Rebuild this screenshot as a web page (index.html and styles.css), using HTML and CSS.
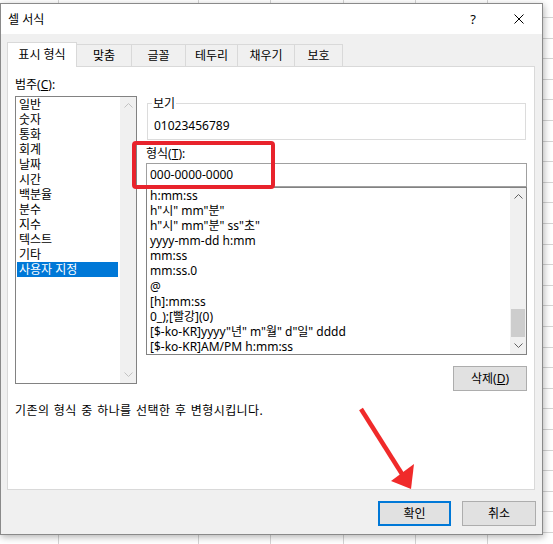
FILE: index.html
```html
<!DOCTYPE html>
<html lang="ko">
<head>
<meta charset="utf-8">
<title>셀 서식</title>
<link rel="stylesheet" href="styles.css">
</head>
<body>
<div class="dialog">
  <div class="titlebar">
    <span class="title">셀 서식</span>
    <div class="caption">
      <span class="cap help">?</span>
      <span class="cap close"><svg width="10" height="10" viewBox="0 0 10 10"><path d="M0.5 0.5L9.5 9.5M9.5 0.5L0.5 9.5" stroke="#000" stroke-width="1" fill="none"/></svg></span>
    </div>
  </div>
  <div class="main">
    <div class="tabs">
      <div class="tab active">표시 형식</div>
      <div class="tab">맞춤</div>
      <div class="tab">글꼴</div>
      <div class="tab">테두리</div>
      <div class="tab">채우기</div>
      <div class="tab">보호</div>
    </div>
    <div class="panel">
      <div class="columns">
        <div class="col-left">
          <div class="label">범주(<u>C</u>):</div>
          <div class="listbox cat-list">
            <ul class="items cat-items">
              <li>일반</li>
              <li>숫자</li>
              <li>통화</li>
              <li>회계</li>
              <li>날짜</li>
              <li>시간</li>
              <li>백분율</li>
              <li>분수</li>
              <li>지수</li>
              <li>텍스트</li>
              <li>기타</li>
              <li class="selected">사용자 지정</li>
            </ul>
            <div class="vscroll disabled">
              <div class="arrow"><svg width="9" height="5" viewBox="0 0 9 5"><polyline points="0.5,4.5 4.5,0.5 8.5,4.5" fill="none" stroke="currentColor"/></svg></div>
              <div class="track"></div>
              <div class="arrow"><svg width="9" height="5" viewBox="0 0 9 5"><polyline points="0.5,0.5 4.5,4.5 8.5,0.5" fill="none" stroke="currentColor"/></svg></div>
            </div>
          </div>
        </div>
        <div class="col-right">
          <fieldset class="sample">
            <legend>보기</legend>
            <div class="sample-value">01023456789</div>
          </fieldset>
          <div class="label fmt-label">형식(<u>T</u>):</div>
          <div class="textbox">000-0000-0000</div>
          <div class="listbox fmt-list">
            <ul class="items fmt-items">
              <li>h:mm:ss</li>
              <li>h"시" mm"분"</li>
              <li>h"시" mm"분" ss"초"</li>
              <li>yyyy-mm-dd h:mm</li>
              <li>mm:ss</li>
              <li>mm:ss.0</li>
              <li>@</li>
              <li>[h]:mm:ss</li>
              <li>0_);[빨강](0)</li>
              <li>[$-ko-KR]yyyy"년" m"월" d"일" dddd</li>
              <li>[$-ko-KR]AM/PM h:mm:ss</li>
            </ul>
            <div class="vscroll">
              <div class="arrow"><svg width="9" height="5" viewBox="0 0 9 5"><polyline points="0.5,4.5 4.5,0.5 8.5,4.5" fill="none" stroke="currentColor"/></svg></div>
              <div class="track"></div>
              <div class="thumb"></div>
              <div class="arrow"><svg width="9" height="5" viewBox="0 0 9 5"><polyline points="0.5,0.5 4.5,4.5 8.5,0.5" fill="none" stroke="currentColor"/></svg></div>
            </div>
          </div>
          <div class="row-right"><button class="btn">삭제(<u>D</u>)</button></div>
        </div>
      </div>
      <p class="desc">기존의 형식 중 하나를 선택한 후 변형시킵니다.</p>
    </div>
  </div>
  <div class="footer">
    <button class="btn primary">확인</button>
    <button class="btn">취소</button>
  </div>
</div>
<div class="highlight"></div>
<svg class="arrow-mark" width="553" height="544" viewBox="0 0 553 544">
  <line x1="361" y1="409" x2="402" y2="474" stroke="#f02a2a" stroke-width="4.5"/>
  <polygon points="411,489 391,481 414,464" fill="#f02a2a"/>
</svg>
</body>
</html>
```

FILE: styles.css
```css
* { box-sizing: border-box; }

body {
  margin: 0;
  padding-top: 3px;
  width: 553px;
  height: 544px;
  overflow: hidden;
  position: relative;
  font-family: "Noto Sans", "Noto Sans CJK KR", sans-serif;
  font-size: 12px;
  color: #000;
  background-color: #fff;
  background-image:
    linear-gradient(to right,
      transparent 58px, #d4d4d4 58px 59px,
      transparent 59px 198px, #d4d4d4 198px 199px,
      transparent 199px 270px, #d4d4d4 270px 271px,
      transparent 271px 343px, #d4d4d4 343px 344px,
      transparent 344px 415px, #d4d4d4 415px 416px,
      transparent 416px 487px, #d4d4d4 487px 488px,
      transparent 488px),
    repeating-linear-gradient(to bottom,
      transparent 0 17px, #d4d4d4 17px 18px, transparent 18px 20.6px);
}

.dialog {
  width: 543px;
  height: 532px;
  border: 1px solid #8a8a8a;
  background: #f0f0f0;
  box-shadow: 1px 2px 7px rgba(0, 0, 0, 0.3);
  display: flex;
  flex-direction: column;
}

.titlebar {
  flex: none;
  height: 30px;
  background: #fff;
  display: flex;
  align-items: center;
  padding-left: 7px;
}

.caption {
  margin-left: auto;
  display: flex;
  height: 100%;
}

.cap {
  width: 46px;
  display: flex;
  align-items: center;
  justify-content: center;
}

.help {
  font-size: 13px;
  padding-bottom: 1px;
}

.main {
  padding: 8px 7px 0 6px;
}

.tabs {
  display: grid;
  grid-template-columns: 70px 55px 54px 52px 57px 48px;
  height: 24px;
  align-items: end;
}

.tab {
  height: 22px;
  border: 1px solid #d9d9d9;
  border-left: none;
  border-bottom: none;
  background: #f0f0f0;
  display: flex;
  align-items: center;
  justify-content: center;
  line-height: 1;
}

.tab.active {
  height: 25px;
  margin-bottom: -1px;
  background: #fff;
  border-left: 1px solid #d9d9d9;
  position: relative;
  z-index: 1;
}

.panel {
  height: 424px;
  background: #fff;
  border: 1px solid #d9d9d9;
  padding: 10px 7px 0 7px;
}

.columns {
  display: grid;
  grid-template-columns: 122px 381px;
  column-gap: 9px;
}

.label {
  line-height: 15px;
  height: 15px;
}

.listbox {
  display: flex;
  background: #fff;
  border: 1px solid #828282;
}

.items {
  flex: 1;
  list-style: none;
  margin: 0;
  padding: 0;
  overflow: hidden;
}

.cat-list {
  margin-top: 4px;
  height: 288px;
}

.cat-items {
  padding-left: 1px;
}

.cat-items li {
  height: 15px;
  line-height: 15px;
  padding-left: 2px;
  margin-right: 2px;
  white-space: nowrap;
}

.cat-items li.selected {
  background: #0078d7;
  color: #fff;
}

.vscroll {
  flex: none;
  width: 16px;
  background: #f0f0f0;
  display: flex;
  flex-direction: column;
  color: #606060;
}

.vscroll.disabled {
  color: #c2c2c2;
}

.vscroll .arrow {
  height: 17px;
  display: flex;
  align-items: center;
  justify-content: center;
}

.vscroll .track {
  flex: 1;
}

.vscroll .thumb {
  height: 28px;
  margin: 0 1px;
  background: #cdcdcd;
}

.col-right {
  padding-top: 19px;
}

.sample {
  margin: 0 1px;
  padding: 0 4px 5px 4px;
  border: 1px solid #dcdcdc;
}

.sample legend {
  padding: 0 1px;
  line-height: 15px;
}

.sample-value {
  margin-top: 7px;
  padding-left: 2px;
  line-height: 16px;
}

.fmt-label {
  margin-top: 6px;
}

.textbox {
  margin-top: 2px;
  height: 24px;
  border: 1px solid #a0a0a0;
  padding-left: 3px;
  line-height: 22px;
}

.fmt-list {
  height: 168px;
}

.fmt-items {
  padding-left: 3px;
}

.fmt-items li {
  height: 15.1px;
  line-height: 15.1px;
  white-space: nowrap;
}

.row-right {
  display: flex;
  justify-content: flex-end;
  margin-top: 11px;
}

.btn {
  width: 74px;
  height: 25px;
  padding: 0;
  background: #e1e1e1;
  border: 1px solid #adadad;
  font: inherit;
  color: #000;
  line-height: 23px;
}

.btn.primary {
  width: 73px;
  border: 2px solid #0078d7;
  line-height: 21px;
}

.desc {
  margin: 12px 0 0;
  line-height: 16px;
  letter-spacing: 0.4px;
  word-spacing: 1px;
}

.footer {
  display: flex;
  justify-content: flex-end;
  gap: 11px;
  padding: 11px 6px 0 0;
}

.highlight {
  position: absolute;
  left: 132px;
  top: 141px;
  width: 143px;
  height: 48px;
  border: 4px solid #e8232c;
  border-radius: 4px;
}

.arrow-mark {
  position: absolute;
  left: 0;
  top: 0;
  pointer-events: none;
}
```
